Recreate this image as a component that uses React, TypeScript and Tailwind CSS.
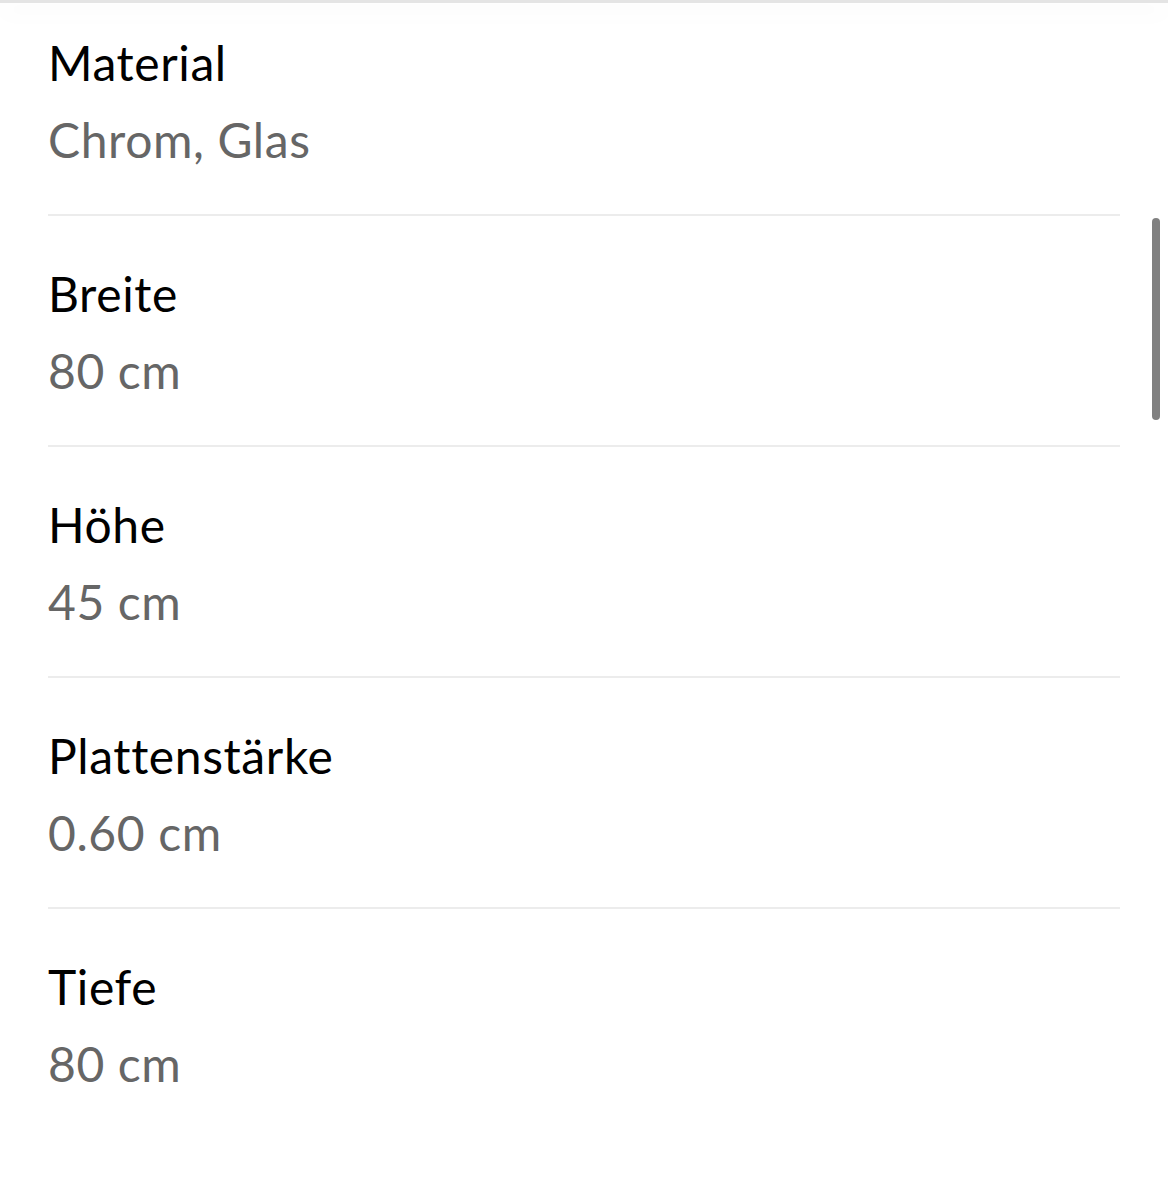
import React from "react";

const specs = [
  { label: "Material", value: "Chrom, Glas" },
  { label: "Breite", value: "80 cm" },
  { label: "Höhe", value: "45 cm" },
  { label: "Plattenstärke", value: "0.60 cm" },
  { label: "Tiefe", value: "80 cm" },
];

export default function App() {
  return (
    <div className="relative min-h-screen bg-white overflow-hidden" style={{ fontFamily: "Lato, 'Noto Sans', sans-serif" }}>
      {/* header shadow peeking in at the top */}
      <div className="absolute top-0 left-0 right-0 h-[3px] bg-[#e4e4e4] shadow-[0_8px_22px_rgba(0,0,0,0.08)] z-10" />

      <div className="px-[48px] -mt-[15px]">
        {specs.map((s, i) => (
          <div
            key={s.label}
            className={`pt-[50px] pb-[46px] tracking-[0.6px] ${i < specs.length - 1 ? "border-b-2 border-[#ececec]" : ""}`}
          >
            <div className="text-[48px] leading-[56px] text-black">{s.label}</div>
            <div className="text-[48px] leading-[56px] mt-[21px] text-[#666666]">{s.value}</div>
          </div>
        ))}
      </div>

      {/* scrollbar thumb */}
      <div className="absolute top-[218px] right-[8px] w-[8px] h-[202px] rounded-full bg-[#808080]" />
    </div>
  );
}
